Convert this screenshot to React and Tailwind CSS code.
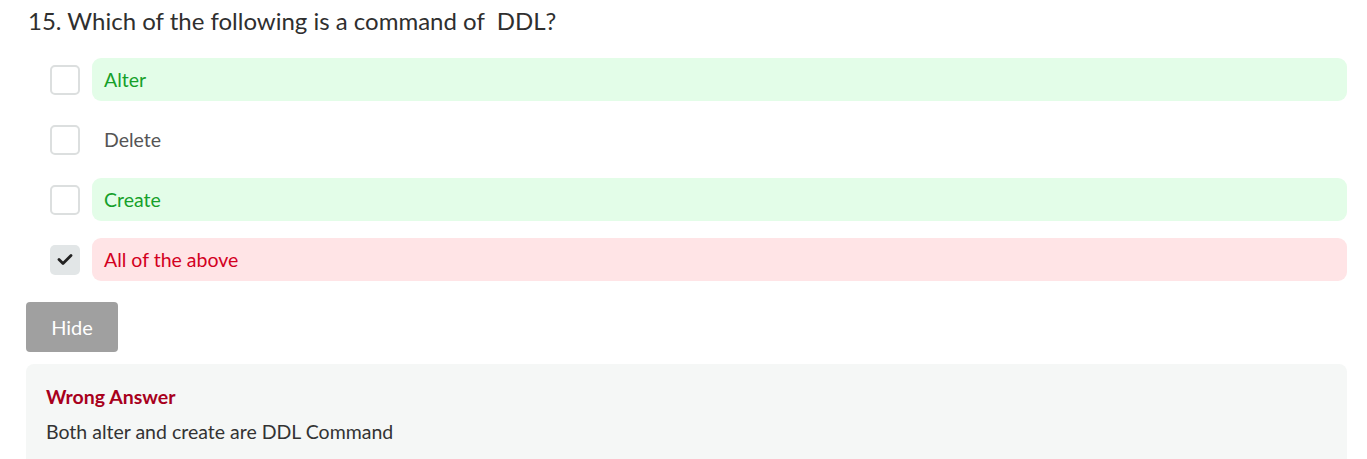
import React from "react";

const options = [
  { label: "Alter", state: "correct", checked: false },
  { label: "Delete", state: "none", checked: false },
  { label: "Create", state: "correct", checked: false },
  { label: "All of the above", state: "wrong", checked: true },
];

function Check({ checked }) {
  if (checked) {
    return (
      <div className="w-[30px] h-[30px] rounded-[5px] bg-[#e2e6e7] flex items-center justify-center shrink-0">
        <svg width="16" height="13" viewBox="0 0 16 13">
          <path d="M2 6.5 L6 10.5 L14 2.5" fill="none" stroke="#222" strokeWidth="2.8" strokeLinecap="round" strokeLinejoin="round" />
        </svg>
      </div>
    );
  }
  return <div className="w-[30px] h-[30px] rounded-[5px] border-2 border-[#dcdfdf] bg-white shrink-0" />;
}

export default function App() {
  return (
    <div className="bg-white min-h-[459px] pl-[26px] pr-[20px] pt-[5px] text-[#333]" style={{ fontFamily: "Lato, 'Open Sans', sans-serif" }}>
      <div className="pl-[2px] text-[24px] leading-[32px] text-[#2f2f2f]">15. Which of the following is a command of&nbsp; DDL?</div>
      <div className="mt-[21px] flex flex-col gap-[17px]">
        {options.map((o) => (
          <div key={o.label} className="flex items-center gap-[12px] pl-[24px]">
            <Check checked={o.checked} />
            <div
              className={
                "flex-1 h-[43px] rounded-[9px] flex items-center pl-[12px] text-[19.5px] " +
                (o.state === "correct"
                  ? "bg-[#e3fde8] text-[#16a02a]"
                  : o.state === "wrong"
                  ? "bg-[#ffe4e6] text-[#d3001f]"
                  : "text-[#555]")
              }
            >
              {o.label}
            </div>
          </div>
        ))}
      </div>
      <button className="mt-[21px] w-[92px] h-[50px] rounded-[4px] bg-[#a0a0a0] text-white text-[20px] flex items-center justify-center">
        Hide
      </button>
      <div className="mt-[12px] rounded-t-[8px] bg-[#f5f7f6] px-[20px] pt-[20px] pb-[20px]">
        <div className="text-[19.5px] font-bold text-[#a8001c] leading-[26px]">Wrong Answer</div>
        <div className="mt-[9px] text-[19.5px] text-[#333] leading-[26px]">Both alter and create are DDL Command</div>
      </div>
    </div>
  );
}
